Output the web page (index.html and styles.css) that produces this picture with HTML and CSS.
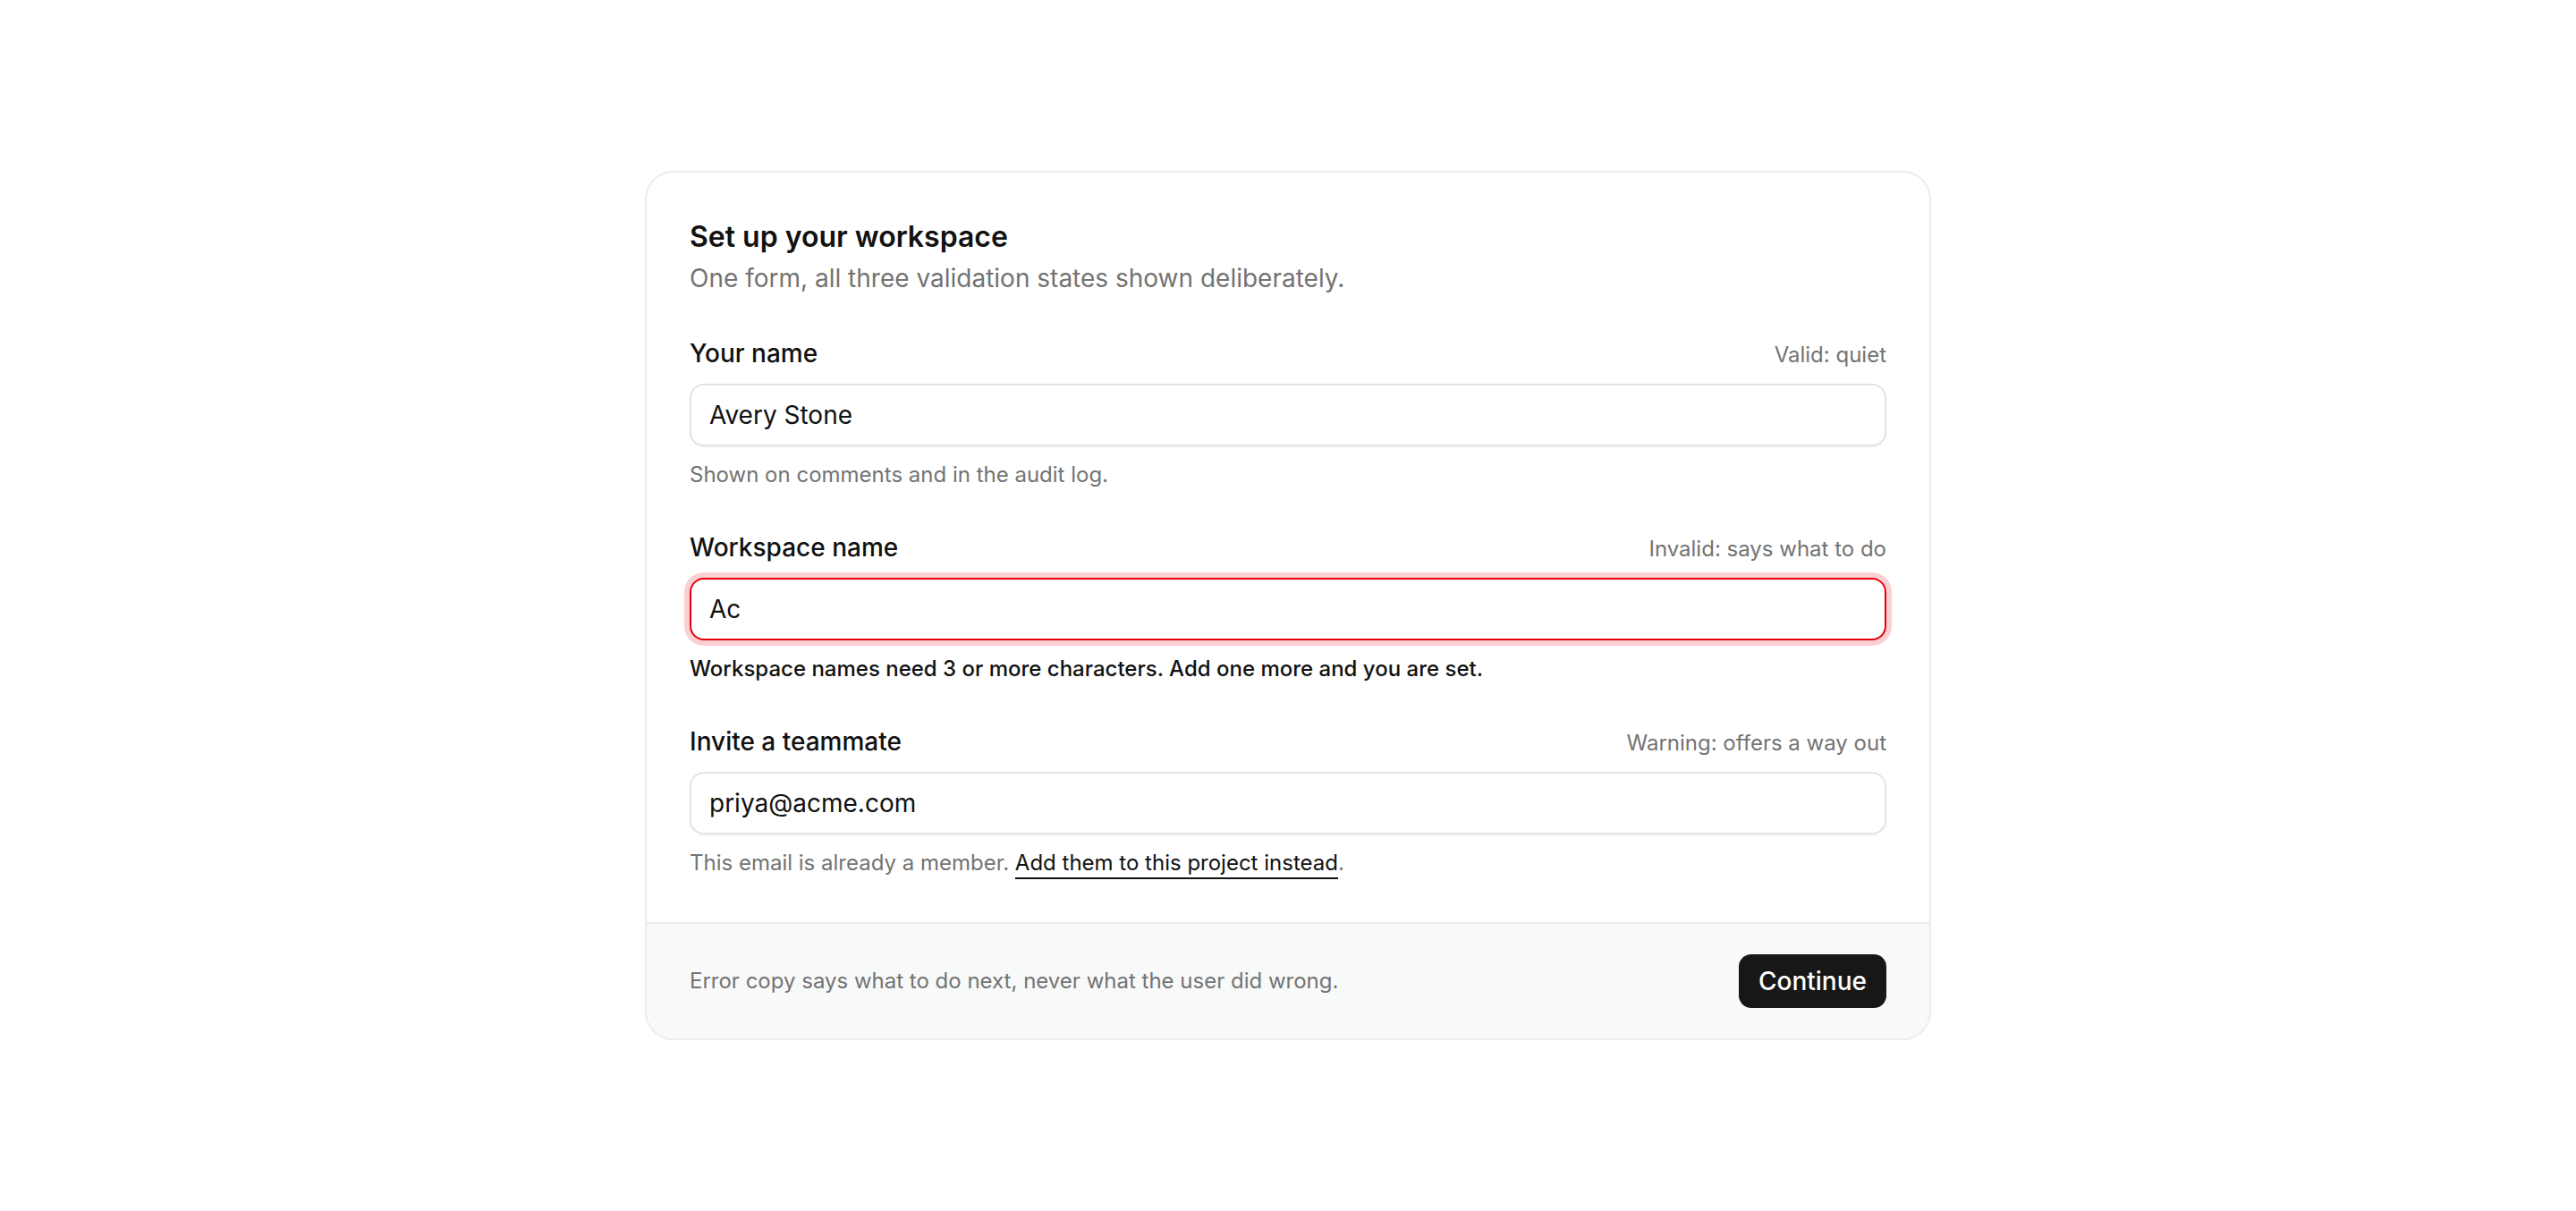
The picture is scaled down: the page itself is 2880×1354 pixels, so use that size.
FILE: index.html
```html
<!DOCTYPE html>
<html lang="en">
<head>
  <meta charset="UTF-8">
  <meta name="viewport" content="width=device-width, initial-scale=1.0">
  <title>Set up your workspace</title>
  <link rel="stylesheet" href="styles.css">
</head>
<body>
<div class="page">
  <form class="card">
    <div class="card-body">
      <h1 class="title">Set up your workspace</h1>
      <p class="subtitle">One form, all three validation states shown deliberately.</p>

      <!-- Valid -->
      <div class="field">
        <div class="field-head">
          <label for="your_name">Your name</label>
          <span class="hint">Valid: quiet</span>
        </div>
        <input type="text" id="your_name" class="input" value="Avery Stone">
        <p class="help">Shown on comments and in the audit log.</p>
      </div>

      <!-- Invalid -->
      <div class="field">
        <div class="field-head">
          <label for="workspace_name">Workspace name</label>
          <span class="hint">Invalid: says what to do</span>
        </div>
        <input type="text" id="workspace_name" class="input input-invalid" value="Ac">
        <p class="help help-error">Workspace names need 3 or more characters. Add one more and you are set.</p>
      </div>

      <!-- Warning -->
      <div class="field">
        <div class="field-head">
          <label for="invite">Invite a teammate</label>
          <span class="hint">Warning: offers a way out</span>
        </div>
        <input type="email" id="invite" class="input" value="priya@acme.com">
        <p class="help">This email is already a member. <a href="#" class="help-link">Add them to this project instead</a>.</p>
      </div>
    </div>

    <div class="card-footer">
      <span class="footnote">Error copy says what to do next, never what the user did wrong.</span>
      <button type="button" class="btn">Continue</button>
    </div>
  </form>
</div>
</body>
</html>
```

FILE: styles.css
```css
body {
  margin: 0;
  font-family: "Inter", "Noto Sans", sans-serif;
  color: #111;
  background: #fff;
}
.page {
  min-height: 100vh;
  display: flex;
  align-items: center;
  justify-content: center;
}
.card {
  width: 1438px;
  box-sizing: border-box;
  border: 2px solid #ececec;
  border-radius: 32px;
  background: #fff;
  overflow: hidden;
}
.card-body {
  padding: 52px 48px 48px;
}
.title {
  margin: 0;
  font-size: 32px;
  line-height: 40px;
  font-weight: 600;
  color: #111;
}
.subtitle {
  margin: 6px 0 0;
  font-size: 28px;
  line-height: 40px;
  color: #737373;
}
.field {
  margin-top: 44px;
}
.field + .field {
  margin-top: 43px;
}
.field-head {
  display: flex;
  justify-content: space-between;
  align-items: baseline;
  height: 40px;
  line-height: 40px;
}
.field-head label {
  font-size: 28px;
  font-weight: 500;
  color: #111;
}
.hint {
  font-size: 24px;
  line-height: 36px;
  color: #737373;
}
.input {
  display: block;
  width: 100%;
  height: 70px;
  box-sizing: border-box;
  margin-top: 14px;
  padding: 0 20px;
  font: inherit;
  font-size: 28px;
  color: #111;
  border: 2px solid #e3e3e3;
  border-radius: 16px;
  background: #fff;
  box-shadow: 0 2px 2px rgba(0, 0, 0, 0.04);
  outline: none;
}
.input-invalid {
  border-color: #e5000b;
  box-shadow: 0 0 0 6px #fbd0d3;
}
.help {
  margin: 14px 0 0;
  font-size: 24px;
  line-height: 36px;
  color: #737373;
}
.help-error {
  color: #111;
  font-weight: 500;
}
.help-link {
  color: #111;
  text-decoration: none;
  padding-bottom: 2px;
  border-bottom: 2px solid #111;
}
.card-footer {
  display: flex;
  align-items: center;
  justify-content: space-between;
  padding: 34px 48px;
  border-top: 2px solid #ececec;
  background: #f8f9f9;
}
.footnote {
  font-size: 24px;
  line-height: 36px;
  color: #737373;
}
.btn {
  height: 60px;
  padding: 0 22px;
  font: inherit;
  font-size: 28px;
  font-weight: 500;
  color: #fff;
  background: #171717;
  border: none;
  border-radius: 14px;
  cursor: pointer;
}
```
